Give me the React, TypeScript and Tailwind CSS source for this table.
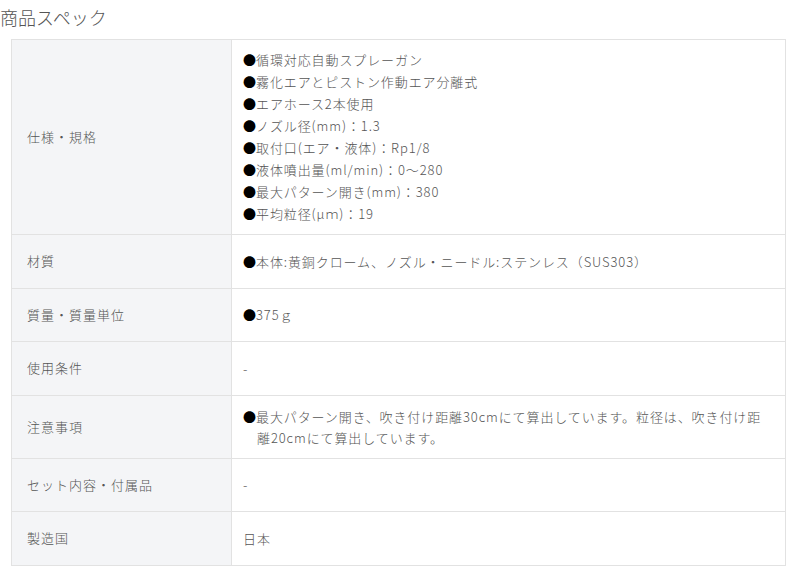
const specs: { label: string; value: string[] | string }[] = [
  {
    label: "仕様・規格",
    value: [
      "●循環対応自動スプレーガン",
      "●霧化エアとピストン作動エア分離式",
      "●エアホース2本使用",
      "●ノズル径(mm)：1.3",
      "●取付口(エア・液体)：Rp1/8",
      "●液体噴出量(ml/min)：0〜280",
      "●最大パターン開き(mm)：380",
      "●平均粒径(μｍ)：19",
    ],
  },
  { label: "材質", value: ["●本体:黄銅クローム、ノズル・ニードル:ステンレス（SUS303）"] },
  { label: "質量・質量単位", value: ["●375ｇ"] },
  { label: "使用条件", value: "-" },
  {
    label: "注意事項",
    value: ["●最大パターン開き、吹き付け距離30cmにて算出しています。粒径は、吹き付け距離20cmにて算出しています。"],
  },
  { label: "セット内容・付属品", value: "-" },
  { label: "製造国", value: "日本" },
]

export default function App() {
  return (
    <div
      className="w-[787px] h-[568px] overflow-hidden bg-white text-[#333] font-light"
      style={{ fontFamily: '"Noto Sans CJK JP", "Noto Sans", sans-serif' }}
    >
      <h2 className="text-[18px] leading-[34px] h-[39px] text-[#555] font-light">商品スペック</h2>
      <div className="ml-[11px] w-[775px] border border-[#e2e2e2] border-b-0">
        {specs.map((s) => {
          const multi = Array.isArray(s.value) && s.value.length > 1
          return (
            <div key={s.label} className="grid grid-cols-[220px_1fr] border-b border-[#e2e2e2]">
              <div className="bg-[#f4f5f7] border-r border-[#e2e2e2] flex items-center min-h-[52.5px] px-[15px] text-[13px] tracking-[1px] leading-[22px] text-[#555]">
                {s.label}
              </div>
              <div
                className={
                  multi
                    ? "flex flex-col justify-center pl-[11px] pr-[12px] py-[9px] text-[13px] tracking-[0.9px] leading-[22px] text-[#555]"
                    : "flex flex-col justify-center min-h-[52.5px] pl-[11px] pr-[12px] py-[10px] text-[13px] tracking-[0.9px] leading-[21px] text-[#555]"
                }
              >
                {Array.isArray(s.value) ? (
                  s.value.map((v) => (
                    <p key={v} className="pl-[14px] -indent-[14px]">
                      <span className="text-black tracking-normal">{v.slice(0, 1)}</span>
                      {v.slice(1)}
                    </p>
                  ))
                ) : (
                  <p>{s.value}</p>
                )}
              </div>
            </div>
          )
        })}
      </div>
    </div>
  )
}
